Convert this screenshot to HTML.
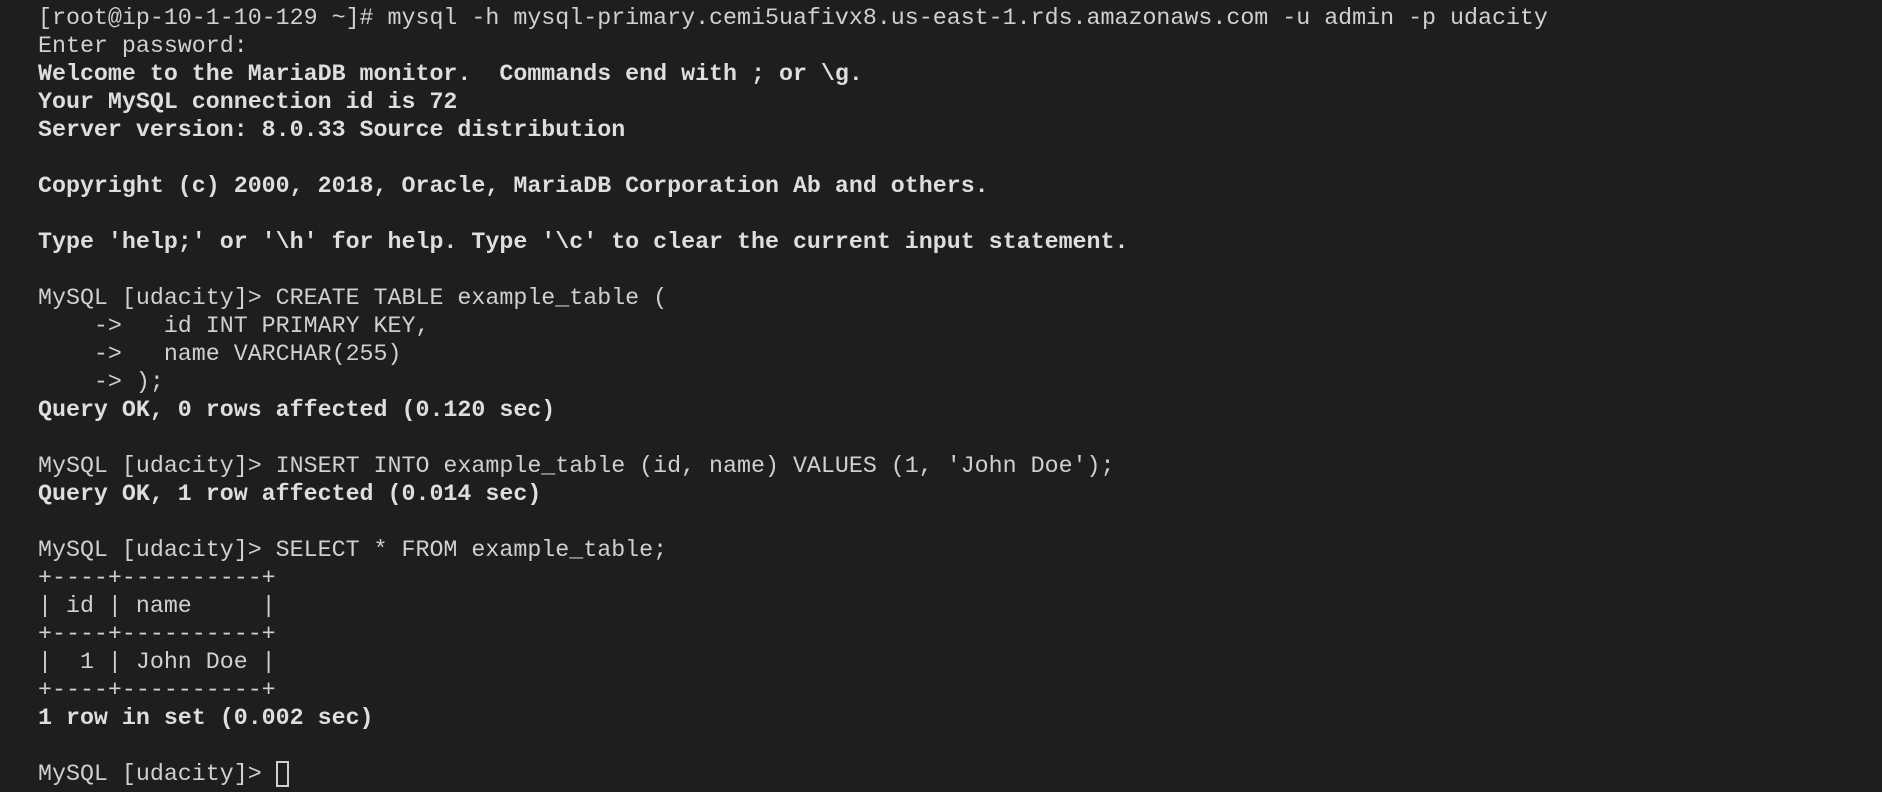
<!DOCTYPE html>
<html><head><meta charset="utf-8"><style>
html,body{margin:0;padding:0;width:1882px;height:792px;background:#1e1e1e;overflow:hidden}
pre{margin:0;position:absolute;left:38px;top:4px;font-family:"Liberation Mono","DejaVu Sans Mono",monospace;font-size:23.3px;line-height:28px;color:#d0d0d0;letter-spacing:0}
b{font-weight:bold;color:#dedede}
.cur{display:inline-block;width:13px;height:26px;border:2px solid #d0d0d0;vertical-align:-7px;box-sizing:border-box}
</style></head><body>
<pre>[root@ip-10-1-10-129 ~]# mysql -h mysql-primary.cemi5uafivx8.us-east-1.rds.amazonaws.com -u admin -p udacity
Enter password:
<b>Welcome to the MariaDB monitor.  Commands end with ; or \g.</b>
<b>Your MySQL connection id is 72</b>
<b>Server version: 8.0.33 Source distribution</b>

<b>Copyright (c) 2000, 2018, Oracle, MariaDB Corporation Ab and others.</b>

<b>Type 'help;' or '\h' for help. Type '\c' to clear the current input statement.</b>

MySQL [udacity]&gt; CREATE TABLE example_table (
    -&gt;   id INT PRIMARY KEY,
    -&gt;   name VARCHAR(255)
    -&gt; );
<b>Query OK, 0 rows affected (0.120 sec)</b>

MySQL [udacity]&gt; INSERT INTO example_table (id, name) VALUES (1, 'John Doe');
<b>Query OK, 1 row affected (0.014 sec)</b>

MySQL [udacity]&gt; SELECT * FROM example_table;
+----+----------+
| id | name     |
+----+----------+
|  1 | John Doe |
+----+----------+
<b>1 row in set (0.002 sec)</b>

MySQL [udacity]&gt; <span class="cur"></span></pre>
</body></html>
